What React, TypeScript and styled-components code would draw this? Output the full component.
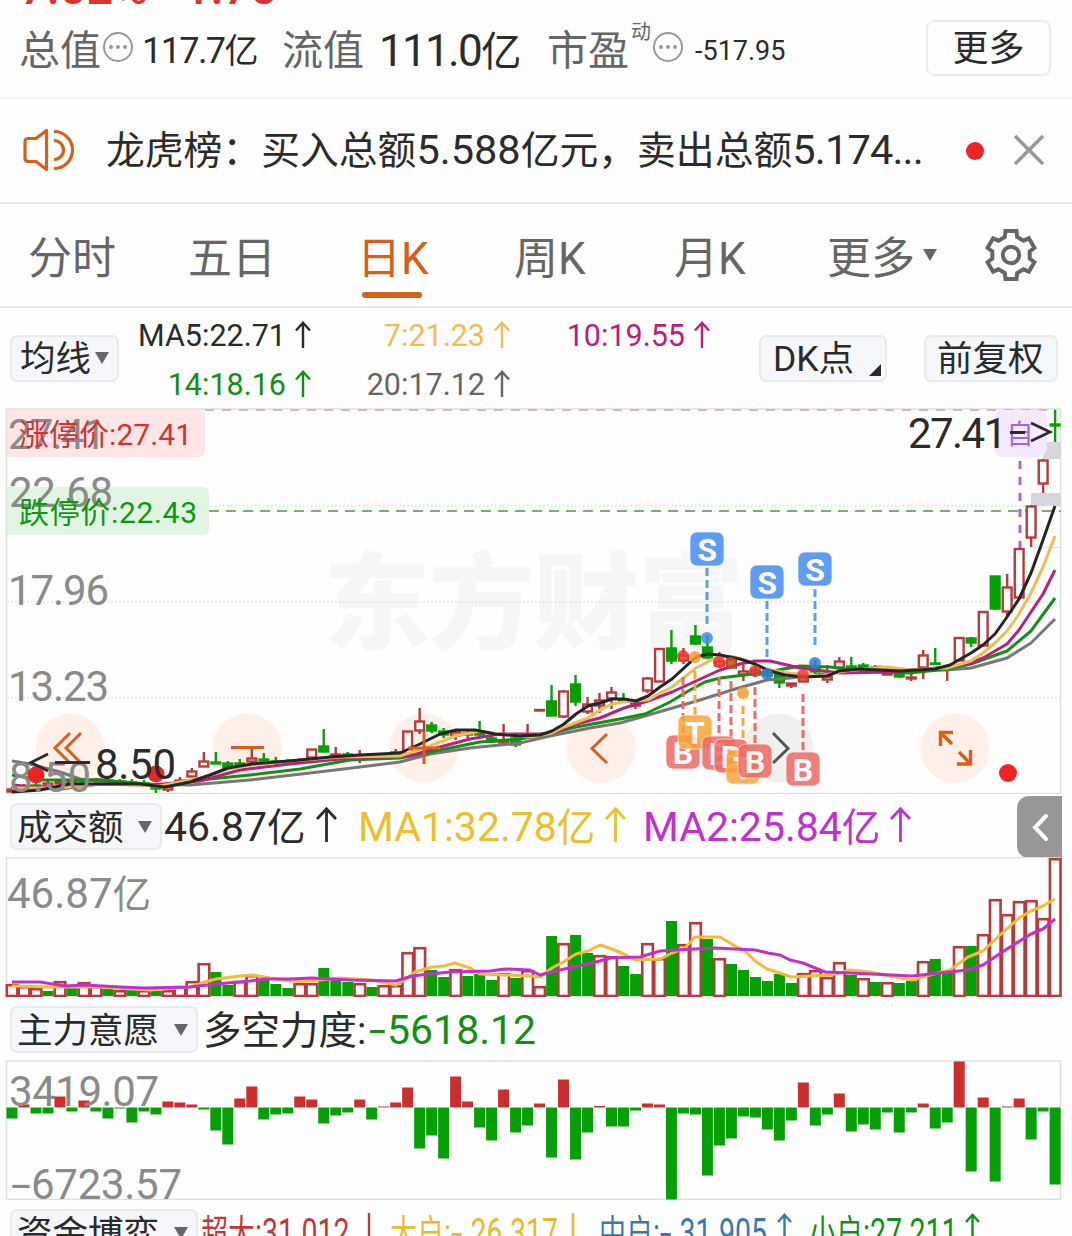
import React from "react";
import styled, { createGlobalStyle } from "styled-components";

const FONT = `Roboto, "Noto Sans CJK SC", sans-serif`;

const C = {
  ink: "#2b2b2b",
  gray: "#666666",
  axis: "#8a8a8a",
  line: "#e4e4e4",
  orange: "#d4601c",
  up: "#b83a3a",
  down: "#05a005",
  yellow: "#ecc02c",
  ma7: "#efbd58",
  ma10: "#b8207c",
  ma14: "#128f16",
  purple: "#c22fce",
};

const GlobalStyle = createGlobalStyle`
  body { margin: 0; background: #fefefe; font-family: ${FONT}; }
  * { box-sizing: border-box; }
  svg { display: block; flex: none; }
`;

const Screen = styled.main`
  width: 1072px;
  height: 1236px;
  overflow: hidden;
  display: flex;
  flex-direction: column;
  background: #fefefe;
  color: ${C.ink};
  white-space: nowrap;
`;

const Quote = styled.header`
  height: 99px;
  flex: none;
  overflow: hidden;
  display: flex;
  flex-direction: column;
  border-bottom: 2px solid #f2f2f2;
`;
const Change = styled.div`
  height: 5px;
  flex: none;
  display: flex;
  align-items: flex-end;
  gap: 36px;
  padding-left: 20px;
  font-size: 47px;
  line-height: 28px;
  font-weight: 500;
  color: #e03030;
`;
const ChangeItem = styled.span`
  margin-bottom: 3px;
`;
const Facts = styled.div`
  height: 92px;
  display: flex;
  align-items: center;
  padding: 0 21px 0 19px;
`;
const Fact = styled.div<{ $w: number }>`
  width: ${(p) => p.$w}px;
  flex: none;
  display: flex;
  align-items: center;
`;
const FactName = styled.span`
  font-size: 41px;
  line-height: 48px;
  color: ${C.gray};
`;
const FactValue = styled.span<{ $size: number; $ls?: number; $ml?: number; $cjk?: number }>`
  font-size: ${(p) => p.$size}px;
  line-height: 48px;
  letter-spacing: ${(p) => p.$ls ?? 0}px;
  margin-left: ${(p) => p.$ml ?? 0}px;
  i { font-style: normal; font-size: ${(p) => p.$cjk ?? 36}px; }
`;
const Super = styled.sup`
  font-size: 20px;
  line-height: 20px;
  align-self: flex-start;
  margin: -5px 0 0 2px;
  color: ${C.gray};
`;
const Ring = styled.span`
  width: 30px;
  height: 30px;
  margin: -8px 0 0 2px;
  border: 2.5px solid #999;
  border-radius: 50%;
  display: flex;
  align-items: center;
  justify-content: center;
  gap: 3px;
`;
const RingDot = styled.i`
  width: 4px;
  height: 4px;
  border-radius: 50%;
  background: #999;
`;
const MoreButton = styled.button`
  width: 125px;
  height: 56px;
  margin: -6px 0 0 auto;
  padding: 3px 0 0;
  border: 2px solid #eaecee;
  border-radius: 8px;
  background: #fefefe;
  font: 36px/49px ${FONT};
  color: ${C.ink};
`;

const Notice = styled.section`
  height: 105px;
  flex: none;
  display: flex;
  align-items: center;
  padding: 0 26px 2px 23px;
  border-bottom: 2px solid ${C.line};
`;
const NoticeText = styled.p`
  width: 821px;
  margin: 2px 0 0 31px;
  font-size: 38.8px;
  line-height: 60px;
`;
const Num = styled.span<{ $ls?: number }>`
  font-size: 41.5px;
  letter-spacing: ${(p) => p.$ls ?? 0}px;
`;
const Dot = styled.span`
  width: 18px;
  height: 18px;
  margin: 2px 30px 0 39px;
  border-radius: 50%;
  background: #ee2424;
`;

const Tabs = styled.nav`
  height: 104px;
  flex: none;
  display: grid;
  grid-template-columns: 160px 169px 157px 160px 153px 158px auto;
  padding-left: 28px;
  border-bottom: 2px solid ${C.line};
`;
const Tab = styled.div<{ $active?: boolean }>`
  display: flex;
  align-items: center;
  gap: 8px;
  height: 102px;
  font-size: 44px;
  color: ${(p) => (p.$active ? C.orange : C.gray)};
  position: relative;
  &::after {
    content: "";
    display: ${(p) => (p.$active ? "block" : "none")};
    position: absolute;
    left: 5px;
    bottom: 8px;
    width: 60px;
    height: 6px;
    border-radius: 3px;
    background: ${C.orange};
  }
`;

const Averages = styled.section`
  height: 100px;
  flex: none;
  display: flex;
  align-items: center;
  padding: 0 14px 0 10px;
`;
const Pill = styled.button<{ $w: number; $ml?: string; $pl?: number }>`
  width: ${(p) => p.$w}px;
  height: 47px;
  flex: none;
  display: flex;
  align-items: center;
  justify-content: space-between;
  margin-left: ${(p) => p.$ml ?? "0"};
  padding: 0 8px 0 ${(p) => p.$pl ?? 5}px;
  border: 2px solid #e8eaed;
  border-radius: 7px;
  background: #f6f7fa;
  font: 35.5px/43px ${FONT};
  color: ${C.ink};
`;
const PillText = styled.span`
  padding-top: 3px;
`;
const MaGrid = styled.div`
  width: 592px;
  height: 100px;
  display: grid;
  grid-template-columns: 182px 199px 200px;
  grid-template-rows: 49px 49px;
  padding: 3px 0 0 10px;
`;
const MaValue = styled.div<{ $color: string }>`
  display: flex;
  align-items: center;
  justify-content: flex-end;
  gap: 9px;
  font-size: 30.5px;
  color: ${(p) => p.$color};
  svg { margin-top: -3px; }
`;
const Corner = styled.i`
  align-self: flex-end;
  margin: 0 -4px 4px 0;
  border-left: 12px solid transparent;
  border-bottom: 12px solid ${C.ink};
`;
const Caret = styled.i`
  border: 7.5px solid transparent;
  border-top: 12px solid ${C.gray};
  border-bottom: 0;
`;

const Legend = styled.section<{ $h: number }>`
  height: ${(p) => p.$h}px;
  flex: none;
  display: flex;
  align-items: flex-start;
  padding: 9px 10px 0 10px;
`;
const Reading = styled.div<{ $color: string; $w: number; $ml?: number; $mt?: number }>`
  width: ${(p) => p.$w}px;
  height: 46px;
  margin: ${(p) => p.$mt ?? -2}px 0 0 ${(p) => p.$ml ?? 0}px;
  flex: none;
  display: flex;
  align-items: center;
  gap: 10px;
  font-size: 41px;
  color: ${(p) => p.$color};
  i { font-style: normal; font-size: 38.5px; }
`;
const Minus = styled.span<{ $w: number }>`
  display: inline-block;
  width: ${(p) => p.$w}px;
  transform: scaleX(1.5);
  transform-origin: left;
`;
const Drawer = styled.button`
  width: 45px;
  height: 62px;
  margin: -7px 0 0 auto;
  padding: 0 0 0 15px;
  border: 0;
  border-radius: 12px 0 0 12px;
  background: #979797;
`;
const Flow = styled.div<{ $color: string; $w: number; $ml?: number }>`
  width: ${(p) => p.$w}px;
  height: 46px;
  margin: -2px 0 0 ${(p) => p.$ml ?? 0}px;
  flex: none;
  display: flex;
  align-items: center;
  color: ${(p) => p.$color};
`;
const Narrow = styled.span<{ $w: number }>`
  width: ${(p) => p.$w}px;
  font-size: 38px;
  transform: scaleX(0.75);
  transform-origin: left;
  i { font-style: normal; font-size: 36px; }
`;

const Arrow = ({ w, h, sw = 2.4, down = false }: { w: number; h: number; sw?: number; down?: boolean }) => (
  <svg width={w} height={h} fill="none" stroke="currentColor" strokeWidth={sw} transform={down ? "rotate(180)" : undefined}>
    <path d={`M${w / 2} ${h}V1.5M1 ${w / 2 + 1.5}L${w / 2} 1.8L${w - 1} ${w / 2 + 1.5}`} />
  </svg>
);

const More = () => (
  <Ring>
    <RingDot />
    <RingDot />
    <RingDot />
  </Ring>
);

const Speaker = () => (
  <svg width="52" height="46" viewBox="0 0 52 46" fill="none" stroke={C.orange} strokeWidth="3.2">
    <path d="M23.500 3.5V42.5L13 34.5H5Q2 34.5 2 31V15Q2 11.500 5 11.500H13Z" strokeLinejoin="round" />
    <path d="M31 4.500A18.500 18.500 0 0 1 31 41.500M31 13.500A9.500 9.500 0 0 1 31 32.500" />
  </svg>
);

const Gear = () => {
  const pts: string[] = [];
  for (let k = 0; k < 6; k++) {
    const a = (k * 60 - 90) * (Math.PI / 180);
    const at = (r: number, deg: number) => {
      const t = a + (deg * Math.PI) / 180;
      return `${(26 + r * Math.cos(t)).toFixed(1)} ${(26 + r * Math.sin(t)).toFixed(1)}`;
    };
    pts.push(at(19, -19), at(24.5, -13), at(24.5, 13), at(19, 19));
  }
  return (
    <svg width="52" height="52" fill="none" stroke={C.gray} strokeWidth="4">
      <path d={`M${pts.join("L")}Z`} />
      <circle cx="26" cy="26" r="8.2" />
    </svg>
  );
};

const cx = (i: number) => 12 + i * 11.99;

/* colour, high, body top, body bottom, low */
type Candle = ["r" | "g", number, number, number, number];
const candles: Candle[] = [
  ["r", 787, 789, 792, 793], ["r", 784, 787, 790, 791], ["g", 781, 785, 788, 790], ["r", 780, 783, 786, 788],
  ["r", 779, 781, 784, 787], ["r", 778, 781, 783, 786], ["g", 778, 780, 782, 784], ["r", 778, 779, 781, 784],
  ["r", 778, 780, 782, 783], ["g", 779, 781, 783, 785], ["g", 779, 782, 784, 786], ["g", 780, 783, 785, 786],
  ["g", 783, 787, 789, 793], ["r", 784, 786, 790, 792], ["r", 777, 780, 783, 784], ["r", 768, 771, 777, 777],
  ["r", 752, 761, 767, 767], ["g", 752, 762, 764, 764], ["g", 761, 763, 768, 768], ["g", 759, 763, 765, 767],
  ["r", 746, 758, 762, 764], ["g", 753, 759, 761, 764], ["g", 757, 761, 763, 766], ["g", 759, 761, 763, 764],
  ["r", 758, 760, 762, 763], ["r", 749, 749, 758, 758], ["g", 729, 746, 752, 752], ["r", 747, 754, 756, 757],
  ["g", 752, 754, 756, 757], ["r", 750, 755, 757, 763], ["r", 753, 755, 757, 758], ["r", 753, 755, 757, 758],
  ["r", 749, 752, 757, 758], ["r", 731, 731, 754, 755], ["r", 708, 721, 731, 734], ["g", 722, 725, 731, 733],
  ["g", 728, 731, 735, 738], ["r", 729, 732, 736, 740], ["r", 730, 733, 735, 738], ["g", 721, 733, 735, 738],
  ["g", 736, 738, 742, 743], ["r", 724, 740, 743, 745], ["g", 737, 738, 745, 747], ["r", 724, 736, 738, 738],
  ["r", 710, 709.5, 711, 711], ["g", 685, 701, 716, 716], ["r", 690, 691, 717, 718], ["g", 675, 684, 702, 706],
  ["r", 697, 704, 712, 714], ["r", 693, 700, 706, 713], ["r", 687, 692, 699, 709], ["g", 693, 699, 702, 703],
  ["r", 700, 703, 706, 709], ["r", 677, 678, 691, 693], ["r", 648, 648.5, 682, 682], ["g", 630, 648, 661, 664],
  ["r", 648, 655, 661, 664], ["g", 625, 636, 644, 645], ["g", 635, 647, 658, 659], ["r", 652, 661, 666, 668],
  ["r", 658, 659, 668, 668], ["r", 665, 671, 675, 681], ["r", 666, 670, 675, 677], ["g", 668, 672, 676, 678],
  ["g", 673, 673, 683, 688], ["r", 683, 683, 686, 688], ["r", 676, 677, 682, 682], ["g", 660, 666, 672, 675],
  ["r", 665, 676, 680, 683], ["r", 657, 661, 668, 668], ["g", 657, 666, 668, 669], ["g", 663, 665, 668, 669],
  ["g", 665, 667, 669, 670], ["r", 673, 673, 675, 675], ["g", 671, 672, 677, 678], ["r", 674, 677, 679, 681],
  ["r", 650, 655, 668, 679], ["g", 648, 663, 664, 664], ["r", 665, 667, 669, 681], ["r", 637, 637.5, 661, 661],
  ["g", 637, 638, 643, 647], ["r", 611, 611.5, 646, 646], ["g", 576, 576, 609, 610], ["r", 574, 587, 612, 616],
  ["r", 548, 548.5, 598, 598], ["r", 505, 506, 538, 547], ["r", 459, 460, 484, 493], ["g", 410, 424, 426, 442],
];

type Line = [string, string];
const maLines: Line[] = [
  ["#777777", "12,761 30,764 60,772 80,779 120,784 190,785 250,780 310,773 360,767 400,762 430,754 470,748 520,743 550,736 590,728 620,723 645,716 700,700 735,689 767,680 790,678 840,672 880,667 910,670 947,670 971,668 1007,658 1031,643 1055,619"],
  [C.ma14, "12,775 40,780 100,780 160,785 210,779 250,775 300,769 350,760 400,758 440,750 480,742 520,739 552,733 576,727 620,719 645,714 670,702 690,690 705,682 720,678 745,675 767,672 800,666 830,667 860,671 910,673 947,669 971,664 1007,651 1031,631 1055,598"],
  [C.ma10, "12,785 60,789 100,784 150,785 200,781 240,770 290,764 350,758 410,756 440,747 470,739 500,734 540,734 552,733 576,724 600,718 624,708 648,701 672,692 696,681 720,670 740,664 755,661 770,661 800,668 840,673 890,672 947,667 971,663 983,658 1007,644 1019,630 1043,594 1055,570"],
  [C.ma7, "12,788 60,788 100,784 160,786 200,778 228,769 252,765 290,761 340,757 400,756 430,746 455,736 480,731 500,734 530,737 552,733 564,727 588,718 600,710 612,704 630,701 648,700 660,693 672,687 696,668 715,658 731,656 750,662 767,669 787,673 820,676 845,671 887,667 911,670 947,668 971,661 983,653 995,643 1007,631 1019,614 1031,593 1043,567 1055,536"],
  ["#252525", "12,792 40,790 70,784 100,784 140,784 165,787 190,782 210,775 228,768 252,764 276,762 300,760 330,757 360,755 400,753 420,744 440,734 456,730 475,730 495,734 520,736 540,735 552,731 564,724 576,714 588,706 600,703 612,699 624,699 636,701 648,696 660,687 672,679 684,668 696,657 708,654 720,655 740,659 755,664 767,670 785,675 803,677 827,676 839,671 860,669 900,671 935,669 950,665 971,653 983,645 995,634 1007,617 1019,599 1031,573 1043,540 1055,506"],
];

const volumeDirs = "rrrgrgrrgrgrgrrrrggrrgggrrgggrgrrrrggrgggrgrrgrggrrggrrgrrgrggggggrrrrgrgrggrggrgrrrrrrr";
const volumeTops = [
  984, 986, 988, 991, 981, 988, 982, 986, 989, 990, 988, 990, 991, 990, 986, 981, 963, 972, 985, 981, 975, 980, 984, 988,
  983, 983, 968, 980, 982, 983, 987, 985, 985, 952, 947, 970, 977, 969, 976, 974, 980, 973, 978, 970, 986, 936, 943, 935,
  953, 955, 956, 966, 974, 943, 958, 921, 944, 922, 939, 958, 964, 970, 977, 981, 974, 983, 973, 970, 977, 962, 975, 978,
  982, 982, 983, 981, 961, 959, 972, 946, 946, 934, 899, 914, 901, 900, 918, 858,
];
const volumeLines: Line[] = [
  ["#efbd3c", "12,986 50,987 100,987 150,990 190,987 205,982 216,979 240,976 252,975 270,978 290,981 310,981 340,978 372,980 396,985 408,978 415,972 432,967 444,966 455,963 470,968 480,974 530,976 540,977 552,968 565,961 576,954 588,951 600,945 612,949 624,954 635,960 660,959 672,953 685,948 695,937 720,937 735,946 744,950 755,961 767,969 780,973 791,977 830,975 840,973 850,970 870,972 912,980 930,975 950,970 968,957 983,951 1000,935 1019,918 1031,911 1043,906 1055,899"],
  [C.purple, "12,982 40,982 65,986 85,985 120,987 145,988 190,987 216,984 250,981 265,979 290,979 312,978 350,980 396,981 412,976 430,974 450,972 490,971 505,969 530,970 540,975 560,970 600,961 610,958 640,957 660,951 695,949 715,948 755,950 768,953 780,955 790,960 803,963 825,972 850,973 912,976 940,973 968,970 983,965 1007,949 1031,934 1043,929 1055,919"],
];

const force = [
  -11, 3, -6, -6, 11, -4, 7, -4, -11, -1, -15, -4, -7, 6, 5, 3, -2, -23, -37, 9, 21, -12, -7, -6, 11, 8, -16, -8, -5, 8,
  -12, 1, 5, 20, -41, -28, -51, 31, 6, -20, -33, 18, -25, -18, 4, -50, 28, -52, -25, 1.5, -19, -19, -3, 4, 3, -92, -6, -7,
  -68, -38, -31, -9, -10, -22, -33, -13, 25, -18, -7, 14, -24, -17, -22, -5, -25, -5, 4, -21, -15, 46, -64, 10, -74, 1, 9,
  -32, -4, -77,
];

const AxisText = ({ x, y, w, children }: { x: number; y: number; w: number; children: string }) => (
  <text x={x} y={y} fontSize="42" fill={C.axis} textLength={w}>
    {children}
  </text>
);

const Lines = ({ lines }: { lines: Line[] }) => (
  <>
    {lines.map(([color, points]) => (
      <polyline key={color} points={points} fill="none" stroke={color} strokeWidth="3" strokeLinejoin="round" />
    ))}
  </>
);

const Badge = ({ x, y, c, t }: { x: number; y: number; c: string; t: string }) => (
  <g opacity={t === "S" ? 1 : 0.85}>
    <rect x={x - 17} y={y - 17} width="34" height="34" rx="7" fill={c} stroke="#fff" strokeOpacity="0.7" />
    <text x={x} y={y + 11.5} fontSize="32" fontWeight="700" fill="#fff" textAnchor="middle">
      {t}
    </text>
  </g>
);

const BLUE = "#5e9df6";
const RED = "#ee6a62";
const AMBER = "#fba53a";
/* x, line start, line end, colour */
const stems: [number, number, number, string][] = [
  [707, 568, 625, BLUE], [767, 601, 658, BLUE], [815, 589, 647, BLUE],
  [683, 677, 735, RED], [695, 671, 716, AMBER], [719, 677, 736, RED], [731, 681, 740, RED],
  [743, 706, 750, AMBER], [755, 687, 745, RED], [803, 694, 752, RED],
];
const pins: [number, number, string][] = [
  [683, 656, "#f03a30"], [695, 657, "#fb9c2c"], [707, 638, "#3f8be8"], [719, 662, "#f03a30"], [731, 663, "#c0501c"],
  [743, 693, "#fb9c2c"], [755, 671, "#e03a30"], [767, 674, "#2f80d8"], [803, 675, "#f03a30"], [815, 663, "#2f80d8"],
];

const PriceChart = () => (
  <svg width="1072" height="386" viewBox="0 408 1072 386" fontFamily={FONT}>
    <text x="324" y="641" fontSize="106" fontWeight="900" fill="#f6f6f6" textLength="420">东方财富</text>
    <rect x="6.500" y="409" width="1054" height="384.500" fill="none" stroke="#e0e0e0" strokeWidth="1.500" />
    {[506, 602, 698].map((y) => (
      <path key={y} d={`M7 ${y}H1060`} stroke="#d0d0d0" strokeDasharray="1.500 2.500" />
    ))}
    <path d="M1031 547.500H1060" stroke="#e0e0e0" />
    <path d="M205 410H1056" stroke="#ddb5b5" strokeWidth="2" strokeDasharray="9 8" />
    <path d="M209 511H1061" stroke="#6fb56f" strokeWidth="1.800" strokeDasharray="10 7" />
    {[70, 247, 424, 601, 955].map((x) => (
      <circle key={x} cx={x} cy="748" r="34.500" fill="#fef0e8" />
    ))}
    <circle cx="779" cy="748" r="34.500" fill="#f0f0f0" />
    <path d="M7 410H199Q205 410 205 416V451Q205 457 199 457H7Z" fill="#ffd4d4" fillOpacity="0.58" />
    <path d="M7 487H203Q209 487 209 493V529Q209 535 203 535H7Z" fill="#d2efd2" fillOpacity="0.65" />
    <AxisText x={8} y={449} w={98}>27.41</AxisText>
    <AxisText x={9} y={507} w={104}>22.68</AxisText>
    <AxisText x={8} y={604.5} w={101}>17.96</AxisText>
    <AxisText x={8} y={701} w={101}>13.23</AxisText>
    <text x="19" y="444.500" fontSize="30" fill="#d63030" textLength="173">涨停价:27.41</text>
    <text x="19" y="522.500" fontSize="30" fill="#0e9812" textLength="178">跌停价:22.43</text>
    <rect x="1043" y="442" width="18" height="17" fill="#d5d7dc" />
    <rect x="1031" y="493" width="30" height="13" fill="#d5d7dc" />
    <rect x="994" y="410" width="53" height="47" rx="9" fill="#f4e9fe" />
    <text x="1020" y="444" fontSize="27" fill="#a067e0" textAnchor="middle">自</text>
    <path d="M1020 461V548" stroke="#a067e0" strokeWidth="3" strokeDasharray="8 8" />
    {candles.map(([k, hi, top, bot, lo], i) => {
      const c = k === "r" ? C.up : C.down;
      const x = cx(i);
      return (
        <g key={i} stroke={c} strokeWidth="2.400">
          <path d={`M${x} ${hi}V${top}M${x} ${bot}V${lo}`} />
          <rect x={x - 4.400} y={top + 0.500} width="8.800" height={Math.max(0.5, bot - top - 1)} fill={k === "r" ? "#fefefe" : c} />
        </g>
      );
    })}
    <Lines lines={maLines} />
    <AxisText x={9} y={792} w={82}>8.50</AxisText>
    <circle cx="36" cy="775" r="8.500" fill="#ee2424" />
    <circle cx="156" cy="774" r="8.500" fill="#ee2424" />
    <g fill="none" stroke={C.orange} strokeWidth="3">
      <path d="M70 733L55 748L70 763M81 733L66 748L81 763" />
      <path d="M231 747.500H264M424 731V764M408 748H440M607 734L592 748.500L607 763" />
      <path d="M953 732.500H940.500V746M940.500 732.500L952 744M957 764H970.500V750M970.500 764L959 752" strokeWidth="3.400" />
    </g>
    <path d="M773 733L788 748.500L773 763" fill="none" stroke="#555" strokeWidth="3" />
    {stems.map(([x, a, b, c]) => (
      <path key={x} d={`M${x} ${a}V${b}`} stroke={c} strokeWidth="3" strokeDasharray="8 4" />
    ))}
    {pins.map(([x, y, c]) => (
      <circle key={x} cx={x} cy={y} r="6" fill={c} fillOpacity="0.85" />
    ))}
    <Badge x={707} y={549} c={BLUE} t="S" />
    <Badge x={767} y={582} c={BLUE} t="S" />
    <Badge x={815} y={569} c={BLUE} t="S" />
    <Badge x={683} y={752} c={RED} t="B" />
    <Badge x={695} y={732} c={AMBER} t="T" />
    <Badge x={719} y={753} c={RED} t="B" />
    <Badge x={731} y={756} c={RED} t="B" />
    <Badge x={743} y={767} c={AMBER} t="T" />
    <Badge x={755} y={761} c={RED} t="B" />
    <Badge x={803} y={769} c={RED} t="B" />
    <text x="908" y="447.500" fontSize="42" fill={C.ink} textLength="99">27.41</text>
    <path d="M1010 432.500H1025M1031 423L1050 432L1031 441" fill="none" stroke={C.ink} strokeWidth="2.800" />
    <path d="M48 754L31 762.500L48 771M55 762.500H90" fill="none" stroke={C.ink} strokeWidth="2.800" />
    <text x="95" y="779" fontSize="42" fill={C.ink} textLength="81">8.50</text>
    <circle cx="1008" cy="773" r="9" fill="#ee2424" />
  </svg>
);

const VolumeChart = () => (
  <svg width="1072" height="140" viewBox="0 857 1072 140" fontFamily={FONT}>
    <rect x="6.500" y="857.500" width="1054" height="138.500" fill="none" stroke="#dedede" strokeWidth="1.500" />
    <text x="7" y="908" fontSize="42" fill={C.axis} textLength="144">46.87<tspan fontSize="38.500">亿</tspan></text>
    {volumeTops.map((top, i) =>
      volumeDirs[i] === "r" ? (
        <rect key={i} x={cx(i) - 5.200} y={top + 1.200} width="10.600" height={994.800 - top} fill="#fefefe" stroke={C.up} strokeWidth="2.600" />
      ) : (
        <rect key={i} x={cx(i) - 5.400} y={top} width="11" height={996 - top} fill={C.down} />
      )
    )}
    <Lines lines={volumeLines} />
  </svg>
);

const ForceChart = () => (
  <svg width="1072" height="140" viewBox="0 1060 1072 140" fontFamily={FONT}>
    <rect x="6.500" y="1061" width="1054" height="138.500" fill="none" stroke="#dedede" strokeWidth="1.500" />
    {force.map((v, i) => (
      <rect key={i} x={cx(i) - 5.500} y={v > 0 ? 1107.500 - v : 1107.500} width="11" height={Math.abs(v)} fill={v > 0 ? "#cc2e2e" : C.down} />
    ))}
    <AxisText x={9} y={1105.5} w={150}>3419.07</AxisText>
    <text y="1198.500" fontSize="42" fill={C.axis}>
      <tspan x="11" textLength="20" lengthAdjust="spacingAndGlyphs">-</tspan>
      <tspan x="31" textLength="151">6723.57</tspan>
    </text>
  </svg>
);

export default function App() {
  return (
    <Screen>
      <GlobalStyle />
      <Quote>
        <Change>
          <ChangeItem>7.02%</ChangeItem>
          <ChangeItem>1.75</ChangeItem>
        </Change>
        <Facts>
          <Fact $w={263}>
            <FactName>总值</FactName>
            <More />
            <FactValue $size={36} $ls={-1.6} $ml={9} $cjk={34}>117.7<i>亿</i></FactValue>
          </Fact>
          <Fact $w={265}>
            <FactName>流值</FactName>
            <FactValue $size={44} $ls={-1.7} $ml={15} $cjk={40.5}>111.0<i>亿</i></FactValue>
          </Fact>
          <Fact $w={260}>
            <FactName>市盈</FactName>
            <Super>动</Super>
            <More />
            <FactValue $size={27} $ml={12}>-517.95</FactValue>
          </Fact>
          <MoreButton>更多</MoreButton>
        </Facts>
      </Quote>

      <Notice>
        <Speaker />
        <NoticeText>
          龙虎榜：买入总额<Num>5.588</Num>亿元，卖出总额<Num $ls={-0.8}>5.174...</Num>
        </NoticeText>
        <Dot />
        <svg width="30" height="30" stroke="#999" strokeWidth="3.600">
          <path d="M1 1L29 29M29 1L1 29" />
        </svg>
      </Notice>

      <Tabs>
        <Tab>分时</Tab>
        <Tab>五日</Tab>
        <Tab $active>日K</Tab>
        <Tab>周K</Tab>
        <Tab>月K</Tab>
        <Tab>更多<Caret /></Tab>
        <Tab><Gear /></Tab>
      </Tabs>

      <Averages>
        <Pill $w={109} $pl={8}><PillText>均线</PillText><Caret /></Pill>
        <MaGrid>
          <MaValue $color={C.ink}>MA5:22.71<Arrow w={16} h={27} /></MaValue>
          <MaValue $color={C.ma7}>7:21.23<Arrow w={16} h={27} /></MaValue>
          <MaValue $color={C.ma10}>10:19.55<Arrow w={16} h={27} /></MaValue>
          <MaValue $color={C.ma14}>14:18.16<Arrow w={16} h={27} /></MaValue>
          <MaValue $color={C.gray}>20:17.12<Arrow w={16} h={27} /></MaValue>
        </MaGrid>
        <Pill $w={128} $ml="48px" $pl={12}><PillText>DK点</PillText><Corner /></Pill>
        <Pill $w={134} $ml="auto" $pl={11}><PillText>前复权</PillText></Pill>
      </Averages>

      <PriceChart />

      <Legend $h={63}>
        <Pill $w={152}><PillText>成交额</PillText><Caret /></Pill>
        <Reading $color={C.ink} $w={194} $ml={2}><span>46.87<i>亿</i></span><Arrow w={21} h={35} sw={2.8} /></Reading>
        <Reading $color={C.yellow} $w={285}><span>MA1:32.78<i>亿</i></span><Arrow w={21} h={35} sw={2.8} /></Reading>
        <Reading $color={C.purple} $w={285}><span>MA2:25.84<i>亿</i></span><Arrow w={21} h={35} sw={2.8} /></Reading>
        <Drawer>
          <svg width="18" height="30" fill="none" stroke="#fff" strokeWidth="4" strokeLinecap="round">
            <path d="M14 4L3 15.500L14 27" />
          </svg>
        </Drawer>
      </Legend>

      <VolumeChart />

      <Legend $h={63}>
        <Pill $w={188}><PillText>主力意愿</PillText><Caret /></Pill>
        <Reading $color={C.ink} $w={166} $ml={5}><i>多空力度:</i></Reading>
        <Reading $color={C.ma14} $w={175} $mt={1}><span><Minus $w={18}>-</Minus>5618.12</span></Reading>
      </Legend>

      <ForceChart />

      <Legend $h={56}>
        <Pill $w={188}><PillText>资金博弈</PillText><Caret /></Pill>
        <Flow $color="#bd3a3a" $w={189} $ml={3}>
          <Narrow $w={161}><i>超大</i>:31.012</Narrow>
          <Arrow w={14} h={35} down />
        </Flow>
        <Flow $color="#e6bc2c" $w={209}>
          <Narrow $w={176}><i>大户</i>:<Minus $w={26}>-</Minus>26.317</Narrow>
          <Arrow w={14} h={35} down />
        </Flow>
        <Flow $color="#3f74b4" $w={210}>
          <Narrow $w={178}><i>中户</i>:<Minus $w={26}>-</Minus>31.905</Narrow>
          <Arrow w={15} h={35} />
        </Flow>
        <Flow $color={C.ma14} $w={180}>
          <Narrow $w={156}><i>小户</i>:27.211</Narrow>
          <Arrow w={15} h={35} />
        </Flow>
      </Legend>
    </Screen>
  );
}
